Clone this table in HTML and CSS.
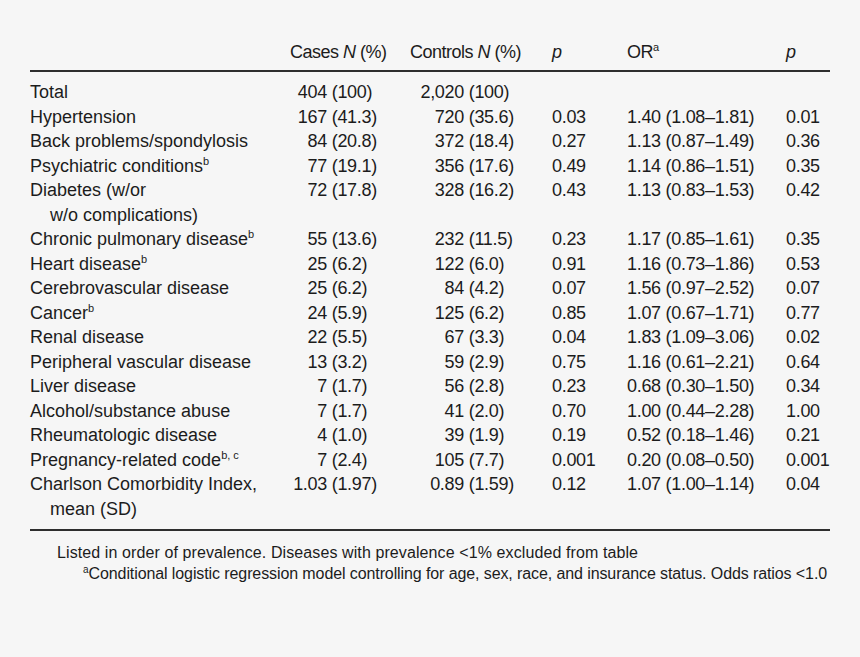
FILE: index.html
```html
<!DOCTYPE html>
<html>
<head>
<meta charset="utf-8">
<link rel="stylesheet" href="styles.css">
</head>
<body>
<div class="page">
  <div class="table">
    <div class="row head">
      <div class="c lab"></div>
      <div class="c">Cases <i>N</i> (%)</div>
      <div class="c">Controls <i>N</i> (%)</div>
      <div class="c"><i>p</i></div>
      <div class="c">OR<sup>a</sup></div>
      <div class="c"><i>p</i></div>
    </div>
    <div class="body">
      <div class="row">
        <div class="c lab">Total</div>
        <div class="c num"><span class="n1">404</span> (100)</div>
        <div class="c num"><span class="n2">2,020</span> (100)</div>
        <div class="c"></div><div class="c"></div><div class="c"></div>
      </div>
      <div class="row">
        <div class="c lab">Hypertension</div>
        <div class="c num"><span class="n1">167</span> (41.3)</div>
        <div class="c num"><span class="n2">720</span> (35.6)</div>
        <div class="c num">0.03</div><div class="c num">1.40 (1.08–1.81)</div><div class="c num">0.01</div>
      </div>
      <div class="row">
        <div class="c lab">Back problems/spondylosis</div>
        <div class="c num"><span class="n1">84</span> (20.8)</div>
        <div class="c num"><span class="n2">372</span> (18.4)</div>
        <div class="c num">0.27</div><div class="c num">1.13 (0.87–1.49)</div><div class="c num">0.36</div>
      </div>
      <div class="row">
        <div class="c lab">Psychiatric conditions<sup>b</sup></div>
        <div class="c num"><span class="n1">77</span> (19.1)</div>
        <div class="c num"><span class="n2">356</span> (17.6)</div>
        <div class="c num">0.49</div><div class="c num">1.14 (0.86–1.51)</div><div class="c num">0.35</div>
      </div>
      <div class="row">
        <div class="c lab">Diabetes (w/or<br>w/o complications)</div>
        <div class="c num"><span class="n1">72</span> (17.8)</div>
        <div class="c num"><span class="n2">328</span> (16.2)</div>
        <div class="c num">0.43</div><div class="c num">1.13 (0.83–1.53)</div><div class="c num">0.42</div>
      </div>
      <div class="row">
        <div class="c lab">Chronic pulmonary disease<sup>b</sup></div>
        <div class="c num"><span class="n1">55</span> (13.6)</div>
        <div class="c num"><span class="n2">232</span> (11.5)</div>
        <div class="c num">0.23</div><div class="c num">1.17 (0.85–1.61)</div><div class="c num">0.35</div>
      </div>
      <div class="row">
        <div class="c lab">Heart disease<sup>b</sup></div>
        <div class="c num"><span class="n1">25</span> (6.2)</div>
        <div class="c num"><span class="n2">122</span> (6.0)</div>
        <div class="c num">0.91</div><div class="c num">1.16 (0.73–1.86)</div><div class="c num">0.53</div>
      </div>
      <div class="row">
        <div class="c lab">Cerebrovascular disease</div>
        <div class="c num"><span class="n1">25</span> (6.2)</div>
        <div class="c num"><span class="n2">84</span> (4.2)</div>
        <div class="c num">0.07</div><div class="c num">1.56 (0.97–2.52)</div><div class="c num">0.07</div>
      </div>
      <div class="row">
        <div class="c lab">Cancer<sup>b</sup></div>
        <div class="c num"><span class="n1">24</span> (5.9)</div>
        <div class="c num"><span class="n2">125</span> (6.2)</div>
        <div class="c num">0.85</div><div class="c num">1.07 (0.67–1.71)</div><div class="c num">0.77</div>
      </div>
      <div class="row">
        <div class="c lab">Renal disease</div>
        <div class="c num"><span class="n1">22</span> (5.5)</div>
        <div class="c num"><span class="n2">67</span> (3.3)</div>
        <div class="c num">0.04</div><div class="c num">1.83 (1.09–3.06)</div><div class="c num">0.02</div>
      </div>
      <div class="row">
        <div class="c lab">Peripheral vascular disease</div>
        <div class="c num"><span class="n1">13</span> (3.2)</div>
        <div class="c num"><span class="n2">59</span> (2.9)</div>
        <div class="c num">0.75</div><div class="c num">1.16 (0.61–2.21)</div><div class="c num">0.64</div>
      </div>
      <div class="row">
        <div class="c lab">Liver disease</div>
        <div class="c num"><span class="n1">7</span> (1.7)</div>
        <div class="c num"><span class="n2">56</span> (2.8)</div>
        <div class="c num">0.23</div><div class="c num">0.68 (0.30–1.50)</div><div class="c num">0.34</div>
      </div>
      <div class="row">
        <div class="c lab">Alcohol/substance abuse</div>
        <div class="c num"><span class="n1">7</span> (1.7)</div>
        <div class="c num"><span class="n2">41</span> (2.0)</div>
        <div class="c num">0.70</div><div class="c num">1.00 (0.44–2.28)</div><div class="c num">1.00</div>
      </div>
      <div class="row">
        <div class="c lab">Rheumatologic disease</div>
        <div class="c num"><span class="n1">4</span> (1.0)</div>
        <div class="c num"><span class="n2">39</span> (1.9)</div>
        <div class="c num">0.19</div><div class="c num">0.52 (0.18–1.46)</div><div class="c num">0.21</div>
      </div>
      <div class="row">
        <div class="c lab">Pregnancy-related code<sup>b, c</sup></div>
        <div class="c num"><span class="n1">7</span> (2.4)</div>
        <div class="c num"><span class="n2">105</span> (7.7)</div>
        <div class="c num">0.001</div><div class="c num">0.20 (0.08–0.50)</div><div class="c num">0.001</div>
      </div>
      <div class="row">
        <div class="c lab">Charlson Comorbidity Index,<br>mean (SD)</div>
        <div class="c num"><span class="n1">1.03</span> (1.97)</div>
        <div class="c num"><span class="n2">0.89</span> (1.59)</div>
        <div class="c num">0.12</div><div class="c num">1.07 (1.00–1.14)</div><div class="c num">0.04</div>
      </div>
    </div>
    <div class="notes">
      <p class="n-first">Listed in order of prevalence. Diseases with prevalence &lt;1% excluded from table</p>
      <p class="n-second"><sup>a</sup>Conditional logistic regression model controlling for age, sex, race, and insurance status. Odds ratios &lt;1.0</p>
    </div>
  </div>
</div>
</body>
</html>
```

FILE: styles.css
```css
html, body {
  margin: 0;
  padding: 0;
  background: #f6f6f6;
}
.page {
  width: 860px;
  height: 657px;
  overflow: hidden;
  padding: 40px 30px 0 30px;
  box-sizing: border-box;
  font-family: "Liberation Sans", Arial, sans-serif;
  font-size: 18px;
  color: #1c1c1c;
}
.table {
  width: 800px;
}
.row {
  display: grid;
  grid-template-columns: 260px 120px 142px 75px 159px 44px;
  line-height: 24.5px;
}
.head {
  padding-bottom: 5.5px;
  border-bottom: 2px solid #2e2e2e;
  letter-spacing: -0.5px;
}
.body {
  padding: 8px 0 7.5px;
  border-bottom: 2px solid #2e2e2e;
}
.c {
  white-space: nowrap;
}
.num {
  letter-spacing: -0.3px;
}
.lab {
  padding-left: 20px;
  text-indent: -20px;
}
.n1 {
  display: inline-block;
  width: 37px;
  text-align: right;
}
.n2 {
  display: inline-block;
  width: 54px;
  text-align: right;
}
sup {
  font-size: 11px;
  line-height: 0;
  vertical-align: 7px;
  letter-spacing: 0;
}
.notes {
  padding-top: 11px;
  font-size: 16px;
  line-height: 21px;
}
.notes p {
  margin: 0;
  white-space: nowrap;
}
.n-first {
  padding-left: 27px;
  letter-spacing: 0.1px;
}
.n-second {
  padding-left: 53px;
  letter-spacing: -0.1px;
}
.notes sup {
  font-size: 10px;
  vertical-align: 6px;
}
```
